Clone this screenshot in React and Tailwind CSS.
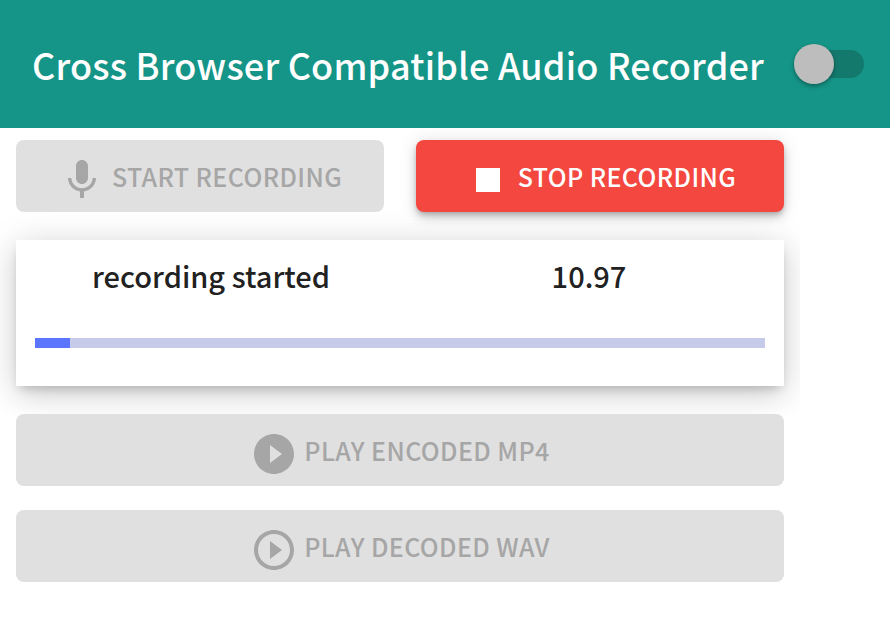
import React from "react";

const micPath = "M12 14c1.66 0 2.99-1.34 2.99-3L15 5c0-1.66-1.34-3-3-3S9 3.34 9 5v6c0 1.66 1.34 3 3 3zm5.3-3c0 3-2.54 5.1-5.3 5.1S6.7 14 6.7 11H5c0 3.41 2.72 6.23 6 6.72V21h2v-3.28c3.28-.48 6-3.3 6-6.72h-1.7z";
const stopPath = "M6 6h12v12H6z";
const playFilledPath = "M12 2C6.48 2 2 6.48 2 12s4.48 10 10 10 10-4.48 10-10S17.52 2 12 2zm-2 14.5v-9l6 4.5-6 4.5z";
const playOutlinePath = "M10 16.5l6-4.5-6-4.5v9zM12 2C6.48 2 2 6.48 2 12s4.48 10 10 10 10-4.48 10-10S17.52 2 12 2zm0 18c-4.41 0-8-3.59-8-8s3.59-8 8-8 8 3.59 8 8-3.59 8-8 8z";

const Icon = ({ d }) => (
  <svg viewBox="0 0 24 24" className="w-12 h-12 shrink-0 fill-current">
    <path d={d} />
  </svg>
);

const DisabledButton = ({ icon, label }) => (
  <button className="h-[72px] w-full pt-2 flex items-center justify-center gap-[6px] rounded-lg bg-[#e0e0e0] text-[#a6a6a6] text-[25px] font-medium tracking-[0.4px]">
    <Icon d={icon} />
    <span className="-translate-y-[3px]">{label}</span>
  </button>
);

const App = () => {
  return (
    <div className="min-h-[626px] bg-white font-['Noto_Sans_CJK_JP',sans-serif]">
      {/* header */}
      <div className="h-32 bg-[#159587] flex items-center pl-8">
        <h1 className="text-white text-[36px] font-medium whitespace-nowrap tracking-[0.2px]">Cross Browser Compatible Audio Recorder</h1>
        <div className="relative ml-auto mr-[26px] w-[68px] h-7 rounded-full bg-[#14796d]">
          <div className="absolute -left-[2px] -top-[6px] w-10 h-10 rounded-full bg-[#bdbdbd] shadow-[0_2px_4px_rgba(0,0,0,0.35)]"></div>
        </div>
      </div>

      <div className="w-[800px] px-4 pt-3 overflow-hidden">
        {/* record buttons */}
        <div className="grid grid-cols-2 gap-8">
          <DisabledButton icon={micPath} label="START RECORDING" />
          <button className="h-[72px] w-full pt-2 flex items-center justify-center gap-[6px] rounded-lg bg-[#f44740] text-white text-[25px] font-medium tracking-[0.4px] shadow-[0_3px_5px_-1px_rgba(0,0,0,0.2),0_6px_10px_rgba(0,0,0,0.14),0_1px_18px_rgba(0,0,0,0.12)]">
            <Icon d={stopPath} />
            <span className="-translate-y-[3px]">STOP RECORDING</span>
          </button>
        </div>

        {/* status card */}
        <div className="mt-7 h-[146px] bg-white text-[#212121] shadow-[0_6px_10px_-4px_rgba(0,0,0,0.2),0_10px_28px_rgba(0,0,0,0.12),0_2px_36px_rgba(0,0,0,0.1)]">
          <div className="grid grid-cols-2 px-[6px] pt-[13px] text-[29px] font-medium text-center leading-[44px]">
            <div>recording started</div>
            <div>10.97</div>
          </div>
          <div className="mx-[19px] mt-[41px] h-[10px] bg-[#c6cbe9]">
            <div className="h-full w-[35px] bg-[#5b75fe]"></div>
          </div>
        </div>

        {/* playback buttons */}
        <div className="mt-7 pb-6 flex flex-col gap-6">
          <DisabledButton icon={playFilledPath} label="PLAY ENCODED MP4" />
          <DisabledButton icon={playOutlinePath} label="PLAY DECODED WAV" />
        </div>
      </div>
    </div>
  );
};

export default App;
